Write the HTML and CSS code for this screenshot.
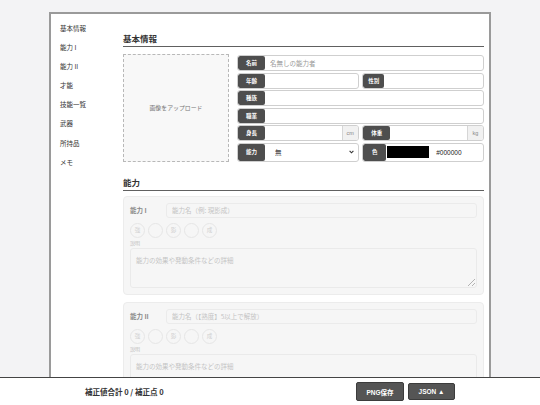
FILE: index.html
```html
<!DOCTYPE html>
<html lang="ja">
<head>
  <meta charset="UTF-8" />
  <meta name="viewport" content="width=device-width, initial-scale=1" />
  <title>キャラクターシート</title>
  <link rel="stylesheet" href="styles.css">
</head>
<body>
  <div class="page">
    <div class="sheet">

      <nav class="side">
        <a>基本情報</a>
        <a>能力 I</a>
        <a>能力 II</a>
        <a>才能</a>
        <a>技能一覧</a>
        <a>武器</a>
        <a>所持品</a>
        <a>メモ</a>
      </nav>

      <main class="main">
        <!-- 基本情報 -->
        <section>
          <h2 class="sec-title">基本情報</h2>
          <div class="basic">
            <div class="upload">画像をアップロード</div>

            <div class="fields">
              <label class="field">
                <span class="tag">名前</span>
                <input type="text" placeholder="名無しの能力者">
              </label>

              <div class="split">
                <label class="field">
                  <span class="tag">年齢</span>
                  <input type="text">
                </label>
                <label class="field">
                  <span class="tag tag-sm">性別</span>
                  <input type="text">
                </label>
              </div>

              <label class="field">
                <span class="tag">種族</span>
                <input type="text">
              </label>

              <label class="field">
                <span class="tag">職業</span>
                <input type="text">
              </label>

              <div class="split">
                <label class="field">
                  <span class="tag">身長</span>
                  <input type="text">
                  <span class="unit">cm</span>
                </label>
                <label class="field">
                  <span class="tag">体重</span>
                  <input type="text">
                  <span class="unit">kg</span>
                </label>
              </div>

              <div class="split tall">
                <label class="field">
                  <span class="tag">能力</span>
                  <select>
                    <option>無</option>
                  </select>
                  <svg class="chev" width="5" height="4" viewBox="0 0 5 4"><path d="M0.6 0.8 L2.5 2.8 L4.4 0.8" fill="none" stroke="#333" stroke-width="1.1"/></svg>
                </label>
                <label class="field">
                  <span class="tag tag-color">色</span>
                  <span class="swatch"></span>
                  <span class="hex">#000000</span>
                </label>
              </div>
            </div>
          </div>
        </section>

        <!-- 能力 -->
        <section>
          <h2 class="sec-title sec-gap">能力</h2>

          <div class="ability">
            <div class="ab-head">
              <span class="ab-name">能力 I</span>
              <input class="ab-input" type="text" placeholder="能力名（例: 現影成）">
            </div>
            <div class="dots">
              <span class="dot">強</span>
              <span class="dot"></span>
              <span class="dot">影</span>
              <span class="dot"></span>
              <span class="dot">成</span>
            </div>
            <div class="ab-note">説明</div>
            <textarea class="ab-text" placeholder="能力の効果や発動条件などの詳細"></textarea>
          </div>

          <div class="ability">
            <div class="ab-head">
              <span class="ab-name">能力 II</span>
              <input class="ab-input" type="text" placeholder="能力名（【熟度】5以上で解放）">
            </div>
            <div class="dots">
              <span class="dot">強</span>
              <span class="dot"></span>
              <span class="dot">影</span>
              <span class="dot"></span>
              <span class="dot">成</span>
            </div>
            <div class="ab-note">説明</div>
            <textarea class="ab-text" placeholder="能力の効果や発動条件などの詳細"></textarea>
          </div>
        </section>
      </main>
    </div>
  </div>

  <footer class="bar">
    <span class="total">補正値合計 0 / 補正点 0</span>
    <div class="bar-btns">
      <button class="btn btn-png">PNG保存</button>
      <button class="btn btn-json">JSON ▲</button>
    </div>
  </footer>
</body>
</html>
```

FILE: styles.css
```css
/* Base */
html, body {
  margin: 0;
  height: 100%;
}

body {
  background: #f3f3f5;
  font-family: "Liberation Sans", "Noto Sans CJK JP", sans-serif;
  color: #333;
  display: flex;
  flex-direction: column;
  overflow: hidden;
}

.page {
  flex: 1;
  overflow: hidden;
  padding-top: 12px;
}

/* Sheet */
.sheet {
  width: 442px;
  box-sizing: border-box;
  margin: 0 auto;
  min-height: 600px;
  background: #ffffff;
  border: 2px solid #9a9a9a;
  border-bottom: none;
  display: flex;
}

/* Side menu */
.side {
  width: 65px;
  flex: none;
  box-sizing: border-box;
  padding: 5px 0 0 9px;
  display: flex;
  flex-direction: column;
}

.side a {
  font-size: 6.5px;
  line-height: 19.1px;
  color: #333;
  font-family: "Noto Sans CJK JP", sans-serif;
}

/* Main column */
.main {
  flex: 1;
  padding: 18px 5px 0 7px;
  min-width: 0;
}

.sec-title {
  margin: 0;
  font-family: "Noto Sans CJK JP", sans-serif;
  font-size: 8.5px;
  line-height: 12px;
  font-weight: bold;
  color: #333;
  padding-bottom: 2px;
  border-bottom: 1.5px solid #606060;
}

.sec-gap {
  margin-top: 14px;
}

/* Basic info block */
.basic {
  display: grid;
  grid-template-columns: 106px 1fr;
  gap: 8px;
  margin-top: 8px;
}

.upload {
  border: 1px dashed #b8b8b8;
  background: #f8f8f8;
  display: flex;
  align-items: center;
  justify-content: center;
  font-family: "Noto Sans CJK JP", sans-serif;
  font-size: 5.9px;
  color: #777;
  margin-top: -1px;
}

.fields {
  display: flex;
  flex-direction: column;
  gap: 1.5px;
}

.split {
  display: grid;
  grid-template-columns: 1fr 1fr;
  gap: 3.5px;
}

.field {
  display: flex;
  align-items: stretch;
  height: 16px;
  box-sizing: border-box;
  border: 1px solid #cfcfcf;
  border-radius: 3px;
  overflow: hidden;
  background: #fff;
}

.tall .field {
  height: 19px;
}

.tag {
  flex: none;
  width: 27px;
  background: #4e4e4e;
  color: #fff;
  font-family: "Noto Sans CJK JP", sans-serif;
  font-size: 5.5px;
  font-weight: bold;
  display: flex;
  align-items: center;
  justify-content: center;
  border-radius: 2px;
}

.tag-sm {
  width: 21px;
}

.tag-color {
  width: 23px;
}

.field input,
.field select {
  flex: 1;
  min-width: 0;
  border: none;
  outline: none;
  background: transparent;
  font-family: "Liberation Sans", "Noto Sans CJK JP", sans-serif;
  font-size: 6.5px;
  color: #333;
  padding: 0 5px;
}

.field input::placeholder {
  color: #999;
}

.field select {
  appearance: none;
  -webkit-appearance: none;
  padding-left: 10px;
}

.chev {
  align-self: center;
  margin-right: 4px;
}

.unit {
  flex: none;
  width: 15px;
  background: #f1f1f1;
  border-left: 1px solid #d6d6d6;
  color: #888;
  font-size: 5.5px;
  display: flex;
  align-items: center;
  justify-content: center;
}

.swatch {
  align-self: center;
  width: 42px;
  height: 12px;
  margin-left: 1px;
  background: #000;
}

.hex {
  align-self: center;
  margin-left: 7px;
  font-size: 6.5px;
  color: #222;
}

/* Ability cards */
.ability {
  margin-top: 5px;
  margin-bottom: 7px;
  background: #f6f6f6;
  border: 1px solid #ececec;
  border-radius: 4px;
  padding: 6px 6px 6px 6px;
}

.ab-head {
  display: flex;
  align-items: center;
  height: 15px;
}

.ab-name {
  width: 36px;
  flex: none;
  font-family: "Noto Sans CJK JP", sans-serif;
  font-size: 6.5px;
  font-weight: bold;
  color: #8a8a8a;
}

.ab-input {
  flex: 1;
  height: 15px;
  box-sizing: border-box;
  border: 1px solid #ebebeb;
  border-radius: 3px;
  background: #f6f6f6;
  font-family: "Noto Sans CJK JP", sans-serif;
  font-size: 6.5px;
  padding: 0 5px;
  outline: none;
}

.ab-input::placeholder {
  color: #c4c4c4;
}

.dots {
  display: flex;
  gap: 3px;
  margin-top: 5px;
}

.dot {
  width: 15px;
  height: 15px;
  box-sizing: border-box;
  border: 1px solid #e6e6e6;
  border-radius: 50%;
  font-family: "Noto Sans CJK JP", sans-serif;
  font-size: 5.5px;
  color: #cfcfcf;
  display: flex;
  align-items: center;
  justify-content: center;
}

.ab-note {
  margin-top: 1px;
  font-family: "Noto Sans CJK JP", sans-serif;
  font-size: 5px;
  line-height: 8px;
  color: #bdbdbd;
}

/* faded (locked) description box */
.ab-text {
  display: block;
  width: 100%;
  height: 40px;
  box-sizing: border-box;
  margin-top: 1px;
  border: 1px solid #dddddd;
  border-radius: 3px;
  background: #f6f6f6;
  font-family: "Noto Sans CJK JP", sans-serif;
  font-size: 6.5px;
  padding: 6px 5px;
  outline: none;
  opacity: 0.45;
}

.ab-text::placeholder {
  color: #878787;
}

/* Bottom bar */
.bar {
  flex: none;
  height: 28px;
  box-sizing: border-box;
  background: #ffffff;
  border-top: 1px solid #444;
  display: flex;
  align-items: center;
  justify-content: space-between;
  padding: 0 85px;
}

.total {
  font-family: "Noto Sans CJK JP", sans-serif;
  font-size: 7.5px;
  font-weight: bold;
  color: #333;
}

.bar-btns {
  display: flex;
  align-items: center;
  gap: 4px;
}

.btn {
  background: #555;
  color: #fff;
  border: 1px solid #3c3c3c;
  border-radius: 2px;
  font-family: "Liberation Sans", "Noto Sans CJK JP", sans-serif;
  font-size: 6.5px;
  font-weight: bold;
  padding: 0;
  cursor: pointer;
}

.btn-png {
  width: 48px;
  height: 19px;
}

.btn-json {
  width: 47px;
  height: 17px;
}
```
